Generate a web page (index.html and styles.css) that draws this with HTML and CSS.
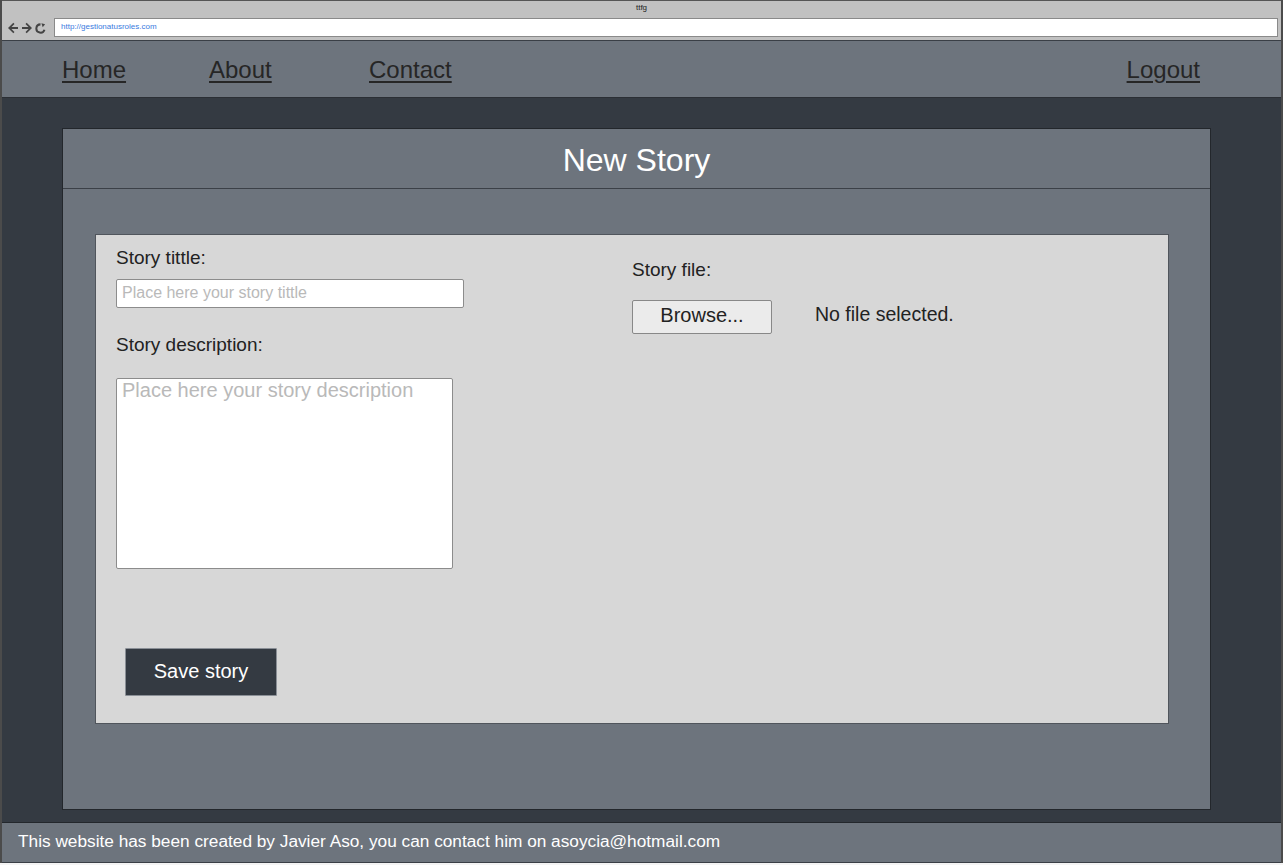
FILE: index.html
```html
<!DOCTYPE html>
<html>
<head>
<meta charset="utf-8">
<title>ttfg</title>
<link rel="stylesheet" href="styles.css">
</head>
<body>
<div class="window">
  <div class="chrome">
    <div class="chrome-title">ttfg</div>
    <div class="addr-row">
      <div class="nav-icons">
        <svg width="12" height="12" viewBox="0 0 12 12"><path d="M11 5H4.5L7.5 2 6.3 0.8 1 6l5.3 5.2L7.5 10 4.5 7H11z" fill="#444"/></svg>
        <svg width="12" height="12" viewBox="0 0 12 12"><path d="M1 5h6.5L4.5 2l1.2-1.2L11 6l-5.3 5.2L4.5 10l3-3H1z" fill="#444"/></svg>
        <svg width="11" height="11" viewBox="0 0 12 12"><path d="M6 1.5a4.5 4.5 0 1 0 4.3 5.8" fill="none" stroke="#444" stroke-width="2.2"/><path d="M7 0.2l4 1.2-2.6 3.2z" fill="#444"/></svg>
      </div>
      <div class="url">http://gestionatusroles.com</div>
    </div>
  </div>

  <nav class="topnav">
    <div class="nav-left">
      <a href="#" class="nav-link">Home</a>
      <a href="#" class="nav-link">About</a>
      <a href="#" class="nav-link">Contact</a>
    </div>
    <a href="#" class="nav-link">Logout</a>
  </nav>

  <main class="main">
    <section class="panel">
      <header class="panel-head">New Story</header>
      <div class="panel-body">
        <div class="card">
          <div class="col-left">
            <label class="lbl lbl-title">Story tittle:</label>
            <input class="txt" type="text" placeholder="Place here your story tittle">
            <label class="lbl lbl-desc">Story description:</label>
            <textarea class="area" placeholder="Place here your story description"></textarea>
            <button class="save">Save story</button>
          </div>
          <div class="col-right">
            <label class="lbl lbl-file">Story file:</label>
            <div class="file-row">
              <button class="browse">Browse...</button>
              <span class="nofile">No file selected.</span>
            </div>
          </div>
        </div>
      </div>
    </section>
  </main>

  <footer class="footer">This website has been created by Javier Aso, you can contact him on asoycia@hotmail.com</footer>
</div>
</body>
</html>
```

FILE: styles.css
```css
* { box-sizing: border-box; }
html, body { margin: 0; padding: 0; background: #f4f4f4; }
body { font-family: "Liberation Sans", Arial, sans-serif; }

.window {
  width: 1283px;
  height: 863px;
  display: flex;
  flex-direction: column;
  border-left: 2px solid #4b4b4b;
  border-right: 2px solid #4b4b4b;
  background: #343a42;
}

.chrome {
  height: 40px;
  background: #c1c1c1;
  border-top: 1px solid #555;
  display: flex;
  flex-direction: column;
}
.chrome-title {
  height: 17px;
  text-align: center;
  font-size: 8px;
  line-height: 14px;
  color: #222;
}
.addr-row {
  display: flex;
  align-items: center;
  height: 19px;
  padding-left: 5px;
  padding-right: 3px;
}
.nav-icons {
  display: flex;
  align-items: center;
  gap: 2px;
  width: 47px;
  padding-top: 1px;
}
.url {
  flex: 1;
  height: 19px;
  background: #fff;
  border: 1px solid #8a8a8a;
  font-size: 8px;
  line-height: 16px;
  color: #3a7be0;
  padding-left: 6px;
}

.topnav {
  height: 58px;
  background: #6d747d;
  border-top: 1px solid #3a3f46;
  border-bottom: 1px solid #2b2f35;
  display: flex;
  align-items: center;
  justify-content: space-between;
  padding-left: 60px;
  padding-right: 81px;
  padding-top: 2px;
}
.nav-left {
  display: grid;
  grid-template-columns: 147px 160px auto;
}
.nav-link {
  font-size: 24px;
  color: #262626;
  text-decoration: underline;
  text-underline-offset: 3px;
  line-height: 28px;
  justify-self: start;
}

.main {
  flex: 1;
  background: #343a42;
  padding: 30px 70px 12px 60px;
  display: flex;
}
.panel {
  flex: 1;
  background: #6d747d;
  border: 1px solid #23272c;
  display: flex;
  flex-direction: column;
}
.panel-head {
  height: 60px;
  border-bottom: 1px solid #3b4047;
  color: #fff;
  font-size: 32px;
  text-align: center;
  line-height: 62px;
}
.panel-body {
  padding: 45px 41px 85px 32px;
  flex: 1;
  display: flex;
}
.card {
  flex: 1;
  background: #d7d7d7;
  border: 1px solid #50555c;
  display: grid;
  grid-template-columns: 516px 1fr;
  padding: 0 0 0 20px;
}
.col-left {
  display: flex;
  flex-direction: column;
  align-items: flex-start;
}
.lbl {
  font-size: 19px;
  color: #222;
  line-height: 22px;
}
.lbl-title { margin-top: 12px; }
.txt {
  margin-top: 10px;
  width: 348px;
  height: 29px;
  border: 1px solid #8c8c8c;
  border-radius: 2px;
  background: #fff;
  font-family: "Liberation Sans", Arial, sans-serif;
  font-size: 16px;
  padding: 0 5px 2px;
  outline: none;
}
.txt::placeholder { color: #b9b9b9; }
.lbl-desc { margin-top: 26px; }
.area {
  margin-top: 22px;
  width: 337px;
  height: 191px;
  border: 1px solid #8c8c8c;
  border-radius: 2px;
  background: #fff;
  font-family: "Liberation Sans", Arial, sans-serif;
  font-size: 20px;
  padding: 0 5px;
  resize: none;
  outline: none;
}
.area::placeholder { color: #b9b9b9; }
.save {
  margin-top: 79px;
  margin-left: 9px;
  width: 152px;
  height: 48px;
  background: #343a42;
  color: #fff;
  border: 1px solid #8a8f96;
  border-radius: 1px;
  font-family: "Liberation Sans", Arial, sans-serif;
  font-size: 20px;
  padding-bottom: 2px;
}

.col-right {
  display: flex;
  flex-direction: column;
}
.lbl-file { margin-top: 24px; }
.file-row {
  margin-top: 19px;
  display: flex;
  align-items: center;
}
.browse {
  width: 140px;
  height: 34px;
  background: #ebebeb;
  border: 1px solid #888;
  border-radius: 2px;
  font-family: "Liberation Sans", Arial, sans-serif;
  font-size: 20px;
  color: #222;
  padding: 0 0 3px;
}
.nofile {
  margin-left: 43px;
  margin-bottom: 5px;
  font-size: 19.5px;
  color: #222;
}

.footer {
  height: 41px;
  background: #6d747d;
  border-top: 1px solid #23272c;
  border-bottom: 1px solid #3a3f46;
  color: #fff;
  font-size: 17.25px;
  line-height: 36px;
  padding-left: 16px;
}
```
